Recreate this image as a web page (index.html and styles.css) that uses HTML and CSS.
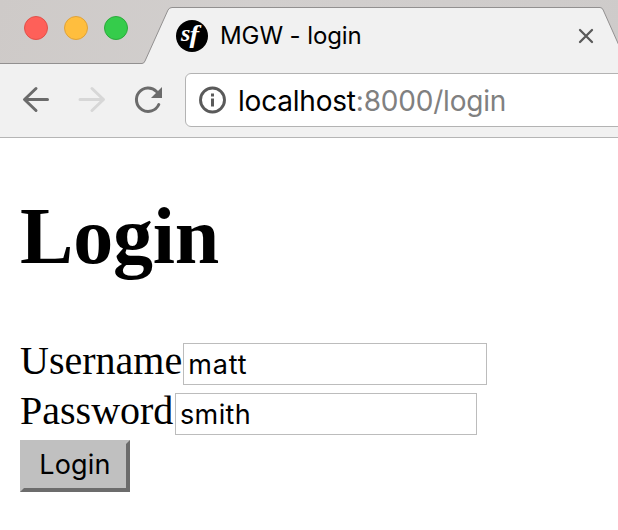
FILE: index.html
```html
<!DOCTYPE html>
<html lang="en">
<head>
<meta charset="utf-8">
<title>MGW - login</title>
<link rel="stylesheet" href="styles.css">
</head>
<body>
<header class="tabstrip">
  <svg class="tab-shape" width="618" height="64" viewBox="0 0 618 64">
    <path d="M0 63.500H142Q144 63.500 145 61L168 10Q169.300 7.500 172 7.500H600Q602.200 7.500 603.200 10L627 63.500V70H0Z" fill="#f1f1f1" stroke="#929090"/>
  </svg>
  <div class="lights"><i class="light close"></i><i class="light minimize"></i><i class="light expand"></i></div>
  <div class="tab">
    <svg class="favicon" width="32" height="32" viewBox="0 0 32 32"><circle cx="16" cy="16" r="16"/><text x="5" y="21" class="logo-text">s</text><text class="logo-text logo-f" transform="translate(13.500 22.500) scale(1.150 1)">f</text></svg>
    <span class="tab-title">MGW - login</span>
    <svg class="tab-close" width="16" height="16" viewBox="0 0 16 16"><path d="M2 2L14 14M14 2L2 14" stroke="#5a5a5a" stroke-width="2.300" stroke-linecap="round"/></svg>
  </div>
</header>
<nav class="toolbar">
  <svg width="174" height="73" viewBox="0 0 174 73" fill="none" stroke-width="3" stroke-linecap="round" stroke-linejoin="round">
    <path d="M47.500 35.500H25M36 24.500L24.500 35.500L36 46.500" stroke="#6b6b6b"/>
    <path d="M80 35.500H103M92 24.500L103.500 35.500L92 46.500" stroke="#d7d7d7"/>
    <path d="M158.800 40.500A11.700 11.700 0 1 1 156.500 27.500" stroke="#6b6b6b"/>
    <path d="M162 23V34H151Z" fill="#6b6b6b"/>
  </svg>
  <div class="address">
    <svg width="28" height="28" viewBox="0 0 28 28"><circle cx="13.500" cy="14" r="12" fill="none" stroke="#5a5a5a" stroke-width="2.900"/><path d="M12 7.500h3v3h-3zM12 12.500h3v8h-3z" fill="#5a5a5a"/></svg>
    <span class="url">localhost<span class="path">:8000/login</span></span>
  </div>
</nav>
<main>
  <h1>Login</h1>
  <form>
    <div class="row"><label for="user">Username</label><input id="user" class="user" type="text" value="matt"></div>
    <div class="row"><label for="pass">Password</label><input id="pass" class="pass" type="text" value="smith"></div>
    <button type="button">Login</button>
  </form>
</main>
</body>
</html>
```
FILE: styles.css
```css
* { box-sizing: border-box; }
body { margin: 0; width: 618px; height: 530px; overflow: hidden; background: #fff; color: #000; }
svg { display: block; flex: none; }
.tabstrip { position: relative; display: flex; height: 64px; background: linear-gradient(110deg, #cecac8, #d2cfce 40%, #cecbca); }
.tab-shape { position: absolute; left: 0; top: 0; }
.lights { position: relative; display: flex; gap: 16px; width: 176px; padding: 16px 0 0 24px; }
.light { width: 24px; height: 24px; border-radius: 50%; border: 1px solid; }
.close { background: #fe6059; border-color: #e1514a; }
.minimize { background: #ffbe3e; border-color: #dfa23a; }
.expand { background: #35cc4b; border-color: #2baa3b; }
.tab { position: relative; display: flex; align-items: center; flex: 1; height: 32px; margin-top: 20px; }
.logo-text { font: italic bold 24px "Liberation Serif", serif; fill: #fff; }
.logo-f { font-size: 25px; }
.tab-title { width: 358px; padding-left: 12px; font: 24px/32px Inter, sans-serif; letter-spacing: -0.1px; white-space: nowrap; }
.tab-close { margin-left: 12px; }
.toolbar { display: flex; height: 74px; background: #f1f1f1; border-bottom: 1px solid #b5b5b5; }
.address { display: flex; align-items: center; flex: none; width: 450px; height: 54px; margin: 9px 0 0 11px; padding-left: 13px; background: #fff; border: 1px solid #b3b3b3; border-radius: 6px; }
.url { margin-left: 11px; padding-top: 2px; font: 28px/34px Inter, sans-serif; letter-spacing: -0.2px; white-space: nowrap; }
.path { color: #808080; }
main { padding: 52px 20px 0; }
h1 { margin: 0; font: bold 80px/92px "Liberation Serif", serif; letter-spacing: -0.2px; }
form { margin-top: 57px; }
.row { display: flex; height: 50px; }
label { font: 40px/44px "Liberation Serif", serif; }
input { height: 42px; margin: 4px 0 0 1px; padding: 0 0 0 4px; border: 1px solid #bcbcbc; border-radius: 0; background: #fff; font: 27px/40px Inter, sans-serif; outline: 0; }
.user { width: 304px; letter-spacing: 0.9px; }
.pass { width: 302px; margin-left: 1.600px; letter-spacing: 0.4px; }
button { display: block; width: 110px; height: 52px; margin-top: 1px; padding: 0 0 2px; border: 4px solid; border-color: #c0c0c0 #6c6c6c #6c6c6c #c0c0c0; border-radius: 0; background: #c0c0c0; color: #000; font: 27px/38px Inter, sans-serif; letter-spacing: 0.2px; }
```
